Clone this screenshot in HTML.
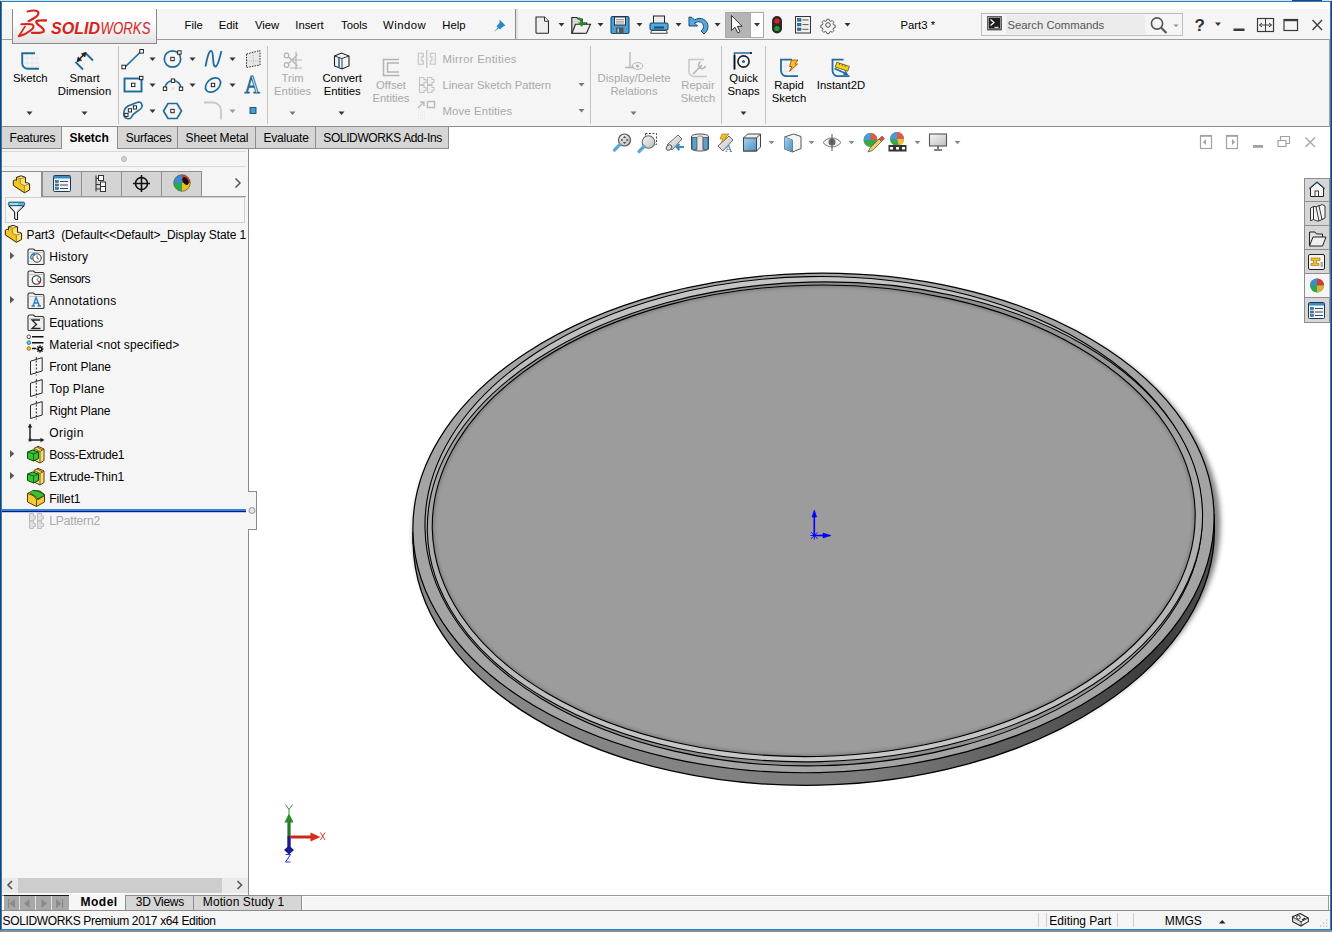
<!DOCTYPE html>
<html><head><meta charset="utf-8">
<style>
*{margin:0;padding:0;box-sizing:border-box}
html,body{width:1332px;height:932px;overflow:hidden;background:#3c3c48;position:relative}
.a{position:absolute}
.t{position:absolute;font-family:"Liberation Sans",sans-serif;font-size:11.3px;line-height:12px;white-space:nowrap;color:#000}
.g{color:#a9a9a9}
.b{font-weight:bold}
svg{position:absolute;overflow:visible}
</style></head><body>
<!-- desktop edges -->
<div class="a" style="left:0;top:0;width:1332px;height:1px;background:#e6dcd2"></div>
<div class="a" style="left:0;top:930px;width:1332px;height:2px;background:#8c8c8c"></div>
<!-- window -->
<div class="a" id="win" style="left:1px;top:1px;width:1330px;height:929px;border:1px solid #1883d7;background:#fff"></div>
<!-- menubar -->
<div class="a" style="left:2px;top:9px;width:1328px;height:30px;background:#f5f5f5"></div>
<div class="a" style="left:2px;top:39px;width:1328px;height:1px;background:#9c9c9c"></div>
<!-- ribbon -->
<div class="a" style="left:2px;top:40px;width:1328px;height:86px;background:#f5f5f5"></div>
<div class="a" style="left:2px;top:126px;width:1328px;height:1px;background:#8e8e8e"></div>
<div class="a" style="left:1329px;top:39px;width:1px;height:88px;background:#a0a0a0"></div>
<!-- logo box -->
<div class="a" style="left:12px;top:9px;width:145px;height:35px;border:1px solid #8a8a8a;border-top:none;background:linear-gradient(to bottom,#ffffff 0%,#fdfdfd 40%,#e2e2e2 100%)"></div>

<!-- graphics area -->
<div class="a" style="left:249px;top:127px;width:1081px;height:768px;background:#fff"></div>

<!-- tab strip -->


<!-- command manager tabs -->
<div class="a" style="left:2px;top:127px;width:447px;height:22px;background:#d6d6d6;border-right:1px solid #8e8e8e"></div>
<div class="a" style="left:61px;top:127px;width:1px;height:21px;background:#8e8e8e"></div>
<div class="a" style="left:62px;top:127px;width:55px;height:22px;background:#f5f5f5"></div>
<div class="a" style="left:117px;top:127px;width:1px;height:21px;background:#8e8e8e"></div>
<div class="a" style="left:177px;top:127px;width:1px;height:21px;background:#8e8e8e"></div>
<div class="a" style="left:255px;top:127px;width:1px;height:21px;background:#8e8e8e"></div>
<div class="a" style="left:315px;top:127px;width:1px;height:21px;background:#8e8e8e"></div>
<div class="a" style="left:2px;top:148px;width:60px;height:1px;background:#8e8e8e"></div>
<div class="a" style="left:117px;top:148px;width:332px;height:1px;background:#8e8e8e"></div>
<div class="t" style="left:9.5px;top:132px;font-size:12px;letter-spacing:-0.2px">Features</div>
<div class="t b" style="left:69.5px;top:132px;font-size:12px">Sketch</div>
<div class="t" style="left:125.7px;top:132px;font-size:12px;letter-spacing:-0.2px">Surfaces</div>
<div class="t" style="left:185.5px;top:132px;font-size:12px;letter-spacing:-0.1px">Sheet Metal</div>
<div class="t" style="left:263.5px;top:132px;font-size:12px;letter-spacing:-0.2px">Evaluate</div>
<div class="t" style="left:323.3px;top:132px;font-size:12px;letter-spacing:-0.38px">SOLIDWORKS Add-Ins</div>

<!-- 3D part -->
<svg style="left:0;top:0" width="1332" height="932">
<defs>
 <filter id="shb" x="-10%" y="-10%" width="120%" height="120%"><feGaussianBlur stdDeviation="2.6"/></filter>
 <filter id="aob" x="-5%" y="-5%" width="110%" height="110%"><feGaussianBlur stdDeviation="1.6"/></filter>
 <clipPath id="clipD"><ellipse cx="813.73" cy="520.84" rx="381.52" ry="235.68" transform="rotate(-1.278 813.73 520.84)"/></clipPath>
 <linearGradient id="gF" x1="0" y1="0" x2="0" y2="1"><stop offset="0" stop-color="#c6c6c6"/><stop offset="1" stop-color="#8c8c8c"/></linearGradient>
 <linearGradient id="gE2" x1="0" y1="0" x2="0" y2="1"><stop offset="0" stop-color="#8e8e8e"/><stop offset="1" stop-color="#c8c8c8"/></linearGradient>
 <linearGradient id="gSide" x1="0" y1="0" x2="1" y2="0"><stop offset="0" stop-color="#888888"/><stop offset="0.3" stop-color="#848484"/><stop offset="0.55" stop-color="#7c7c7c"/><stop offset="0.78" stop-color="#5a5a5a"/><stop offset="0.92" stop-color="#3c3c3c"/><stop offset="1" stop-color="#505050"/></linearGradient>
</defs>
<g>
 <ellipse cx="816.99" cy="529.28" rx="403.66" ry="251.49" transform="rotate(-1.268 816.99 529.28)" fill="#303030" opacity="0.6" filter="url(#shb)"/>
 <g transform="rotate(-1.268 813.49 522.98)">
  <ellipse cx="813.49" cy="535.58" rx="400.66" ry="249.69" fill="url(#gSide)" stroke="#000" stroke-width="1.3"/>
  <rect x="412.83" y="522.98" width="801.32" height="12.6" fill="url(#gSide)"/>
  <path d="M412.83 522.98 v12.6 M1214.15 522.98 v12.6" stroke="#000" stroke-width="1.3"/>
  <ellipse cx="813.49" cy="522.98" rx="400.66" ry="249.69" fill="#a4a4a4" stroke="#000" stroke-width="1.2"/>
 </g>
 <ellipse cx="813.62" cy="521.2" rx="388.69" ry="244.66" transform="rotate(-1.002 813.62 521.2)" fill="url(#gF)" stroke="#000" stroke-width="1.1"/>
 <ellipse cx="814.94" cy="521.88" rx="387.71" ry="239.82" transform="rotate(-1.498 814.94 521.88)" fill="url(#gE2)" stroke="#000" stroke-width="1.1"/>
 <ellipse cx="813.73" cy="520.84" rx="381.52" ry="235.68" transform="rotate(-1.278 813.73 520.84)" fill="#9c9c9c"/>
 <g clip-path="url(#clipD)"><ellipse cx="813.73" cy="520.84" rx="381.52" ry="235.68" transform="rotate(-1.278 813.73 520.84)" fill="none" stroke="#5c5c5c" stroke-width="4" opacity="0.45" filter="url(#aob)"/></g>
 <ellipse cx="813.73" cy="520.84" rx="381.52" ry="235.68" transform="rotate(-1.278 813.73 520.84)" fill="none" stroke="#000" stroke-width="1.1"/>
</g>
<!-- origin -->
<g fill="#0000ff" stroke="#0000ff">
 <path d="M814.3 535.5 V516" stroke-width="1.6"/>
 <path d="M814.3 510 l2.3 7 h-4.6 z" stroke-width="0.6"/>
 <path d="M814.3 535.5 H823" stroke-width="1.6"/>
 <path d="M831 535.5 l-8 -2.4 v4.8 z" stroke-width="0.6"/>
 <path d="M811 532.2 l6.6 6.6 M811 538.8 l6.6 -6.6 M810.5 535.5 h7.6 M814.3 531.5 v8" stroke-width="0.9"/>
</g>
<!-- triad -->
<g>
 <path d="M289 836 V822" stroke="#1e7a1e" stroke-width="3.2"/>
 <path d="M289 813.5 l4.6 9 h-9.2 z" fill="#2a8a2a"/>
 <path d="M285.5 804.5 l3.5 5 l3.5-5 M289 809.5 v5" fill="none" stroke="#1e8a1e" stroke-width="0.9"/>
 <path d="M289 836 V848" stroke="#1a1a90" stroke-width="3.4"/>
 <path d="M289 845.5 l5 4.5 l-5 4.5 l-5-4.5 z" fill="#1a1a90"/>
 <path d="M285.5 854.5 h5 l-5 7.5 h5" fill="none" stroke="#1a1af0" stroke-width="0.9"/>
 <path d="M290.5 837 H311" stroke="#c82a1a" stroke-width="3"/>
 <path d="M320.5 837 l-10-4.6 v9.2 z" fill="#d82a1a"/>
 <path d="M320.5 832.5 l4.5 7.5 M325 832.5 l-4.5 7.5" stroke="#e02020" stroke-width="0.9"/>
</g>
</svg>

<!-- feature manager panel -->
<div class="a" style="left:2px;top:149px;width:246px;height:746px;background:#f5f5f5"></div>
<div class="a" style="left:248px;top:149px;width:1px;height:342px;background:#8c8c8c"></div>
<div class="a" style="left:2px;top:151px;width:244px;height:1px;background:#d8d8d8"></div>
<div class="a" style="left:120.5px;top:155.5px;width:6px;height:6px;border-radius:3px;background:#d0d0d0;border:1px solid #b8b8b8"></div>
<div class="a" style="left:2px;top:166px;width:244px;height:1px;background:#d8d8d8"></div>
<!-- FM icon tabs -->
<div class="a" style="left:42px;top:171px;width:160px;height:26px;background:#d4d4d4;border:1px solid #8e8e8e;border-bottom:none"></div>
<div class="a" style="left:2px;top:171px;width:40px;height:1px;background:#8e8e8e"></div>
<div class="a" style="left:41px;top:171px;width:1px;height:26px;background:#8e8e8e"></div>
<div class="a" style="left:81px;top:171px;width:1px;height:26px;background:#8e8e8e"></div>
<div class="a" style="left:121px;top:171px;width:1px;height:26px;background:#8e8e8e"></div>
<div class="a" style="left:161px;top:171px;width:1px;height:26px;background:#8e8e8e"></div>
<div class="a" style="left:42px;top:196px;width:204px;height:1px;background:#9a9a9a"></div>
<!-- filter box -->
<div class="a" style="left:5px;top:197px;width:240px;height:26px;border:1px solid #cfcfcf;background:#f7f7f7"></div>


<!-- bottom tabs -->
<div class="a" style="left:2px;top:895px;width:1328px;height:1px;background:#8c8c8c"></div>
<div class="a" style="left:2px;top:896px;width:1328px;height:14px;background:#fff"></div>
<!-- status bar -->
<div class="a" style="left:2px;top:910px;width:1328px;height:1px;background:#8c8c8c"></div>
<div class="a" style="left:2px;top:911px;width:1328px;height:18px;background:#f5f5f5"></div>


<!-- logo -->
<svg style="left:0;top:0" width="170" height="48">
 <g fill="none" stroke="#d8231b" stroke-linecap="round">
  <path d="M27.6 11.4 C31 10.6 35 10.2 37.2 11.2 C39.6 12.6 38.2 15.2 36 16.9 C33.8 18.6 31 20 28.6 21.2" stroke-width="2.1"/>
  <path d="M21.4 24.3 C25 24 30 23.8 32.4 24.6 C34.4 25.5 33.6 28 31.2 30 C28.4 32.4 23.6 35 18.8 36.3" stroke-width="2.1"/>
  <path d="M25 26.4 L19 36" stroke-width="1.7"/>
  <path d="M46 20.5 C42.5 20.3 38.8 20.2 37 20.9 C35.4 21.6 36.6 23.8 39.4 25.6 C42.6 27.8 44.6 29.6 43.6 31.6 C42.6 33.2 37 33 32 32.8" stroke-width="2.3"/>
 </g>
 <text x="51" y="33.7" font-family="Liberation Sans" font-size="16.2" font-weight="bold" font-style="italic" fill="#d8231b" textLength="49" lengthAdjust="spacingAndGlyphs">SOLID</text>
 <text x="100.5" y="33.7" font-family="Liberation Sans" font-size="16.2" font-style="italic" fill="#d8231b" textLength="50" lengthAdjust="spacingAndGlyphs">WORKS</text>
</svg>
<!-- menu -->
<div class="t" style="left:184.5px;top:19px">File</div>
<div class="t" style="left:218.7px;top:19px">Edit</div>
<div class="t" style="left:255px;top:19px">View</div>
<div class="t" style="left:295.3px;top:19px">Insert</div>
<div class="t" style="left:341px;top:19px">Tools</div>
<div class="t" style="left:383px;top:19px;letter-spacing:0.5px">Window</div>
<div class="t" style="left:442.3px;top:19px">Help</div>
<div class="t" style="left:900.5px;top:19px">Part3 *</div>


<!-- quick access separator -->
<div class="a" style="left:515px;top:9px;width:1px;height:30px;background:#8c8c8c"></div>
<div class="a" style="left:516px;top:9px;width:3px;height:30px;background:linear-gradient(to right,#d8d8d8,#f5f5f5)"></div>
<svg style="left:0;top:0" width="1332" height="40">
 <!-- pin -->
 <path d="M499.5 19.5 l6 6 l-2.2 1 l-3.5 3 l-1.2-1.2 l-4.8 4 l4-4.8 l-1.2-1.2 l3-3.5 z" fill="#2b86c2"/>
 <!-- new doc -->
 <path d="M536 17 h8.5 l4 4.2 v11.3 a0.8 0.8 0 0 1 -0.8 0.8 h-10.9 a0.8 0.8 0 0 1 -0.8 -0.8 z" fill="#eeeeee" stroke="#2a2a2a" stroke-width="1.1"/>
 <path d="M544.5 17 v4.2 h4" fill="#fff" stroke="#2a2a2a" stroke-width="1"/>
 <path d="M558.5 23 h6 l-3 3.5 z" fill="#333"/>
 <!-- open -->
 <path d="M571.8 17.5 h5 l1.5 1.5 h4 v4 h4.5 l-4 10.2 h-11 z" fill="#d8d8d8" stroke="#222" stroke-width="1.1"/>
 <path d="M572 33.2 l3.5-9 h15 l-4 9 z" fill="#efefef" stroke="#222" stroke-width="1.1"/>
 <path d="M579 17 l4 4 v1.5 h2.5 l-3.8 4.3 l-3.8-4.3 h2.5 v-1 l-2.5-3 z" fill="#1f8a1f"/>
 <path d="M597.5 23 h6 l-3 3.5 z" fill="#333"/>
 <!-- save -->
 <rect x="611" y="16.5" width="18" height="17" rx="1.5" fill="#4a9ed4" stroke="#0d4f7a" stroke-width="1.1"/>
 <rect x="614.5" y="17" width="11" height="8" fill="#f4f4f4" stroke="#222" stroke-width="0.9"/>
 <path d="M616 19.5 h8 M616 21.3 h8 M616 23 h8" stroke="#666" stroke-width="0.6"/>
 <rect x="616" y="27.5" width="7.5" height="6" fill="#555"/>
 <rect x="617.5" y="28.5" width="1.5" height="4" fill="#9cd"/>
 <path d="M636.5 23 h6 l-3 3.5 z" fill="#333"/>
 <!-- print -->
 <rect x="653.5" y="16" width="11" height="8.5" fill="#ececec" stroke="#222" stroke-width="1"/>
 <rect x="650" y="23" width="18" height="7" rx="1.5" fill="#56a7d8" stroke="#0d4f7a" stroke-width="1.1"/>
 <rect x="654" y="26.5" width="10" height="2" fill="#0d4f7a"/>
 <path d="M651.5 30.5 h15 l0.8 2.8 h-16.6 z" fill="#fafafa" stroke="#333" stroke-width="0.9"/>
 <path d="M675.5 23 h6 l-3 3.5 z" fill="#333"/>
 <!-- undo -->
 <path d="M689 17 v9 h8.5 l-3 -3 c4-2.5 9-1 9 3.5 c0 2-1 3.5-2.5 4.5 l3 3 c2.5-2 4-4.5 4-7.5 c0-6.5-7.5-10.5-13.5-6.5 l-2.5-2.5 z" fill="#5aa6d6" stroke="#0d4f7a" stroke-width="1"/>
 <path d="M714.5 23 h6 l-3 3.5 z" fill="#333"/>
 <!-- select button -->
 <rect x="725.5" y="12.5" width="38" height="25" fill="#fff" stroke="#a8a8a8" stroke-width="1"/>
 <rect x="726" y="13" width="24.5" height="24" fill="#b4b4b4"/>
 <line x1="750.5" y1="12.5" x2="750.5" y2="37.5" stroke="#a8a8a8" stroke-width="1"/>
 <path d="M731.5 15.5 v15 l3.5-3.2 l2.8 5.5 l2.2-1.1 l-2.7-5.4 h4.8 z" fill="#fff" stroke="#222" stroke-width="0.9"/>
 <path d="M754 23 h6 l-3 3.5 z" fill="#333"/>
 <!-- traffic light -->
 <rect x="772" y="16" width="10" height="17.5" rx="5" fill="#2a2a2a"/>
 <circle cx="777" cy="21" r="2.6" fill="#e02020"/>
 <circle cx="777" cy="28.5" r="2.6" fill="#20a030"/>
 <!-- options -->
 <rect x="795.5" y="16.5" width="15" height="16.5" fill="#f0f0f0" stroke="#333" stroke-width="1"/>
 <rect x="797.5" y="18.6" width="3.5" height="2.6" fill="#2d78b4" stroke="#0d3f6a" stroke-width="0.5"/>
 <rect x="797.5" y="23.3" width="3.5" height="2.6" fill="#2d78b4" stroke="#0d3f6a" stroke-width="0.5"/>
 <rect x="797.5" y="28" width="3.5" height="2.6" fill="#2d78b4" stroke="#0d3f6a" stroke-width="0.5"/>
 <path d="M802.5 19.9 h6 M802.5 24.6 h6 M802.5 29.3 h6" stroke="#333" stroke-width="0.8"/>
 <!-- gear -->
 <g transform="translate(828 25) scale(0.72)">
  <path d="M-1.6 -8 h3.2 l0.5 2.2 l1.9 0.8 l1.9-1.2 l2.3 2.3 l-1.2 1.9 l0.8 1.9 l2.2 0.5 v3.2 l-2.2 0.5 l-0.8 1.9 l1.2 1.9 l-2.3 2.3 l-1.9-1.2 l-1.9 0.8 l-0.5 2.2 h-3.2 l-0.5-2.2 l-1.9-0.8 l-1.9 1.2 l-2.3-2.3 l1.2-1.9 l-0.8-1.9 l-2.2-0.5 v-3.2 l2.2-0.5 l0.8-1.9 l-1.2-1.9 l2.3-2.3 l1.9 1.2 l1.9-0.8 z" fill="#f4f4f4" stroke="#444" stroke-width="1.2"/>
  <circle r="3.2" fill="none" stroke="#444" stroke-width="1.3"/>
 </g>
 <path d="M844.5 23 h6 l-3 3.5 z" fill="#333"/>
</svg>


<!-- search box -->
<div class="a" style="left:981px;top:13px;width:202px;height:23px;border:1px solid #bcbcbc;background:#f5f5f5"></div>
<div class="a" style="left:1006px;top:15px;width:139px;height:19px;background:#ebebeb"></div>
<div class="t" style="left:1007.5px;top:19px;color:#555">Search Commands</div>
<svg style="left:0;top:0" width="1332" height="40">
 <rect x="987.5" y="16.5" width="14" height="13.5" fill="#1e1e1e" stroke="#555" stroke-width="0.8"/>
 <rect x="988.6" y="17.6" width="11.8" height="11.3" fill="none" stroke="#ddd" stroke-width="0.6"/>
 <path d="M990.5 19.5 l3.5 3 l-3.5 3" fill="none" stroke="#fff" stroke-width="1.2"/>
 <path d="M994.5 27.3 h4" stroke="#fff" stroke-width="1"/>
 <circle cx="1157" cy="23.5" r="5.6" fill="none" stroke="#555" stroke-width="1.6"/>
 <path d="M1161 27.5 l5.5 5.5" stroke="#555" stroke-width="2.2"/>
 <path d="M1173.5 24.5 h5 l-2.5 2.5 z" fill="#888"/>
 <text x="1194.5" y="30.5" font-family="Liberation Sans" font-size="17" font-weight="bold" fill="#333">?</text>
 <path d="M1215 22.5 h6 l-3 3.5 z" fill="#333"/>
 <rect x="1233.5" y="28.5" width="11" height="2.5" fill="#3a3a3a"/>
 <rect x="1257.5" y="18.5" width="16" height="13" fill="none" stroke="#3a3a3a" stroke-width="1.2"/>
 <path d="M1265.5 19 v12" stroke="#3a3a3a" stroke-width="1"/>
 <path d="M1259.5 25 h12 M1262 23 l-2.5 2 l2.5 2 M1269 23 l2.5 2 l-2.5 2" fill="none" stroke="#3a3a3a" stroke-width="1"/>
 <rect x="1284" y="19.5" width="13.5" height="11" fill="none" stroke="#3a3a3a" stroke-width="1.2"/>
 <rect x="1284" y="19.2" width="13.5" height="2" fill="#3a3a3a"/>
 <path d="M1312.5 20 l9.5 10 M1322 20 l-9.5 10" stroke="#3a3a3a" stroke-width="1.3"/>
</svg>
<!-- desktop sliver at top right -->
<div class="a" style="left:1292px;top:0;width:30px;height:1px;background:#3c3c60"></div>

<!-- ribbon -->
<div class="a" style="left:118px;top:46px;width:1px;height:78px;background:#c4c4c4"></div>
<div class="a" style="left:267px;top:46px;width:1px;height:78px;background:#c4c4c4"></div>
<div class="a" style="left:590px;top:46px;width:1px;height:78px;background:#c4c4c4"></div>
<div class="a" style="left:721px;top:46px;width:1px;height:78px;background:#c4c4c4"></div>
<div class="a" style="left:765px;top:46px;width:1px;height:78px;background:#c4c4c4"></div>
<div class="t " style="left:-29.7px;width:120px;text-align:center;top:72px">Sketch</div>
<div class="t " style="left:24.5px;width:120px;text-align:center;top:72px">Smart</div>
<div class="t " style="left:24.5px;width:120px;text-align:center;top:85px">Dimension</div>
<div class="t g" style="left:232.60000000000002px;width:120px;text-align:center;top:72px">Trim</div>
<div class="t g" style="left:232.60000000000002px;width:120px;text-align:center;top:85px">Entities</div>
<div class="t " style="left:282.2px;width:120px;text-align:center;top:72px">Convert</div>
<div class="t " style="left:282.2px;width:120px;text-align:center;top:85px">Entities</div>
<div class="t g" style="left:331px;width:120px;text-align:center;top:79px">Offset</div>
<div class="t g" style="left:331px;width:120px;text-align:center;top:92px">Entities</div>
<div class="t g" style="left:442.5px;top:53px;letter-spacing:0.3px">Mirror Entities</div>
<div class="t g" style="left:442.5px;top:79px">Linear Sketch Pattern</div>
<div class="t g" style="left:442.5px;top:105px;letter-spacing:0.15px">Move Entities</div>
<div class="t g" style="left:574px;width:120px;text-align:center;top:72px">Display/Delete</div>
<div class="t g" style="left:574px;width:120px;text-align:center;top:85px">Relations</div>
<div class="t g" style="left:638px;width:120px;text-align:center;top:79px">Repair</div>
<div class="t g" style="left:638px;width:120px;text-align:center;top:91.5px">Sketch</div>
<div class="t " style="left:683.6px;width:120px;text-align:center;top:72px">Quick</div>
<div class="t " style="left:683.6px;width:120px;text-align:center;top:85px">Snaps</div>
<div class="t " style="left:729px;width:120px;text-align:center;top:79px">Rapid</div>
<div class="t " style="left:729px;width:120px;text-align:center;top:91.5px">Sketch</div>
<div class="t " style="left:781px;width:120px;text-align:center;top:79px">Instant2D</div>
<svg style="left:0;top:0" width="1332" height="127">
 <path d="M26.5 111.5 h6 l-3 3.5 z" fill="#333"/> <path d="M81.5 111.5 h6 l-3 3.5 z" fill="#333"/> <path d="M289.5 111.5 h6 l-3 3.5 z" fill="#777"/> <path d="M338.5 111.5 h6 l-3 3.5 z" fill="#333"/> <path d="M630.5 111.5 h6 l-3 3.5 z" fill="#777"/> <path d="M740.5 111.5 h6 l-3 3.5 z" fill="#333"/>
 <path d="M578.5 83 h6 l-3 3.5 z" fill="#777"/> <path d="M578.5 109 h6 l-3 3.5 z" fill="#777"/>
 <path d="M149.5 57.5 h6 l-3 3.5 z" fill="#333"/> <path d="M189.5 57.5 h6 l-3 3.5 z" fill="#333"/> <path d="M229.5 57.5 h6 l-3 3.5 z" fill="#333"/>
 <path d="M149.5 83.5 h6 l-3 3.5 z" fill="#333"/> <path d="M189.5 83.5 h6 l-3 3.5 z" fill="#333"/> <path d="M229.5 83.5 h6 l-3 3.5 z" fill="#333"/>
 <path d="M149.5 109.5 h6 l-3 3.5 z" fill="#333"/> <path d="M229.5 109.5 h6 l-3 3.5 z" fill="#999"/>
 <!-- sketch icon -->
 <g stroke="#e2e2e2" stroke-width="0.8"><path d="M27 54 v15 M32 54 v15 M37 54 v15 M23 58 h16 M23 63 h16 M23 67 h16"/></g>
 <path d="M35 53.2 h-12.8 v10 a5.5 5.5 0 0 0 5.5 5.5 h11.3" fill="none" stroke="#1f6c9c" stroke-width="1.9"/>
 <!-- smart dimension -->
 <path d="M75.5 62 l7.5 7.5 M85 52.5 l8 8" stroke="#1f6c9c" stroke-width="1.8"/>
 <path d="M77.5 61 l8-8" stroke="#222" stroke-width="1.6"/>
 <path d="M77 61.5 l1.2-4.5 l3.3 3.3 z M86 52.5 l-4.5 1.2 l3.3 3.3 z" fill="#222" stroke="#222" stroke-width="0.8"/>
 <!-- line -->
 <path d="M124.5 67.5 L141 51.5" stroke="#1f6c9c" stroke-width="1.7"/>
 <rect x="121.9" y="65.2" width="3.6" height="3.6" fill="#fff" stroke="#111" stroke-width="0.9"/>
 <rect x="139.8" y="49.5" width="3.6" height="3.6" fill="#fff" stroke="#111" stroke-width="0.9"/>
 <!-- circle -->
 <circle cx="172.5" cy="59" r="8.2" fill="none" stroke="#1f6c9c" stroke-width="1.7"/>
 <rect x="170.8" y="57.3" width="3.4" height="3.4" fill="#fff" stroke="#111" stroke-width="0.9"/>
 <rect x="177.7" y="50.8" width="3.4" height="3.4" fill="#fff" stroke="#111" stroke-width="0.9"/>
 <!-- spline -->
 <path d="M205.5 66.5 C207 58 209 50 211.5 51 C214 52 212 67 215.5 66.5 C218.5 66 220 55 221.5 51" fill="none" stroke="#1f6c9c" stroke-width="1.8"/>
 <!-- plane -->
 <path d="M246.5 54 L260 50.5 V65 L246.5 67.5 Z" fill="#e8e8e8" stroke="#222" stroke-width="0.9" stroke-dasharray="1.6 1.1"/>
 <path d="M253.2 51 v16 M247 61 h13" stroke="#aaa" stroke-width="0.7" stroke-dasharray="1 1"/>
 <!-- rectangle -->
 <rect x="124.5" y="78.5" width="17" height="13" fill="none" stroke="#1f6c9c" stroke-width="1.9"/>
 <rect x="131.5" y="83.2" width="3.4" height="3.4" fill="#fff" stroke="#111" stroke-width="0.9"/>
 <rect x="139.5" y="76.3" width="3.4" height="3.4" fill="#fff" stroke="#111" stroke-width="0.9"/>
 <!-- arc -->
 <path d="M165 88.5 A8 8 0 0 1 181 88.5" fill="none" stroke="#1f6c9c" stroke-width="1.6"/>
 <rect x="163.3" y="87" width="3.4" height="3.4" fill="#fff" stroke="#111" stroke-width="0.9"/>
 <rect x="179.3" y="87" width="3.4" height="3.4" fill="#fff" stroke="#111" stroke-width="0.9"/>
 <rect x="171.3" y="79" width="3.4" height="3.4" fill="#fff" stroke="#111" stroke-width="0.9"/>
 <path d="M171.8 87.2 l2.6 2.6 M174.4 87.2 l-2.6 2.6" stroke="#ccc" stroke-width="0.7"/>
 <!-- ellipse -->
 <ellipse cx="213" cy="85" rx="8.5" ry="6" transform="rotate(-40 213 85)" fill="none" stroke="#1f6c9c" stroke-width="1.7"/>
 <rect x="211.3" y="83.3" width="3.4" height="3.4" fill="#fff" stroke="#111" stroke-width="0.9"/>
 <!-- text A -->
 <text x="0" y="0" transform="translate(244.6 93) scale(0.86 1)" font-family="Liberation Serif" font-size="24.5" fill="#f7f7f7" stroke="#1f6c9c" stroke-width="1.1">A</text>
 <!-- slot -->
 <path d="M127 118.5 C122 117 123 109 128 106 L137 102.5 C142 101 143.5 106 140.5 109 C137 112 133 113 131.5 117 C130.5 119.5 129 119 127 118.5 Z" fill="none" stroke="#1f6c9c" stroke-width="1.6"/>
 <rect x="128.3" y="108.8" width="3.2" height="3.2" fill="#fff" stroke="#111" stroke-width="0.9"/>
 <rect x="133.3" y="105.8" width="3.2" height="3.2" fill="#fff" stroke="#111" stroke-width="0.9"/>
 <rect x="124.8" y="113.3" width="3.2" height="3.2" fill="#fff" stroke="#111" stroke-width="0.9"/>
 <!-- polygon -->
 <path d="M168 103.5 h9 l4.5 7.5 l-4.5 7.5 h-9 l-4.5-7.5 z" fill="none" stroke="#1f6c9c" stroke-width="1.7"/>
 <rect x="170.8" y="109.3" width="3.4" height="3.4" fill="#fff" stroke="#111" stroke-width="0.9"/>
 <!-- fillet disabled -->
 <path d="M204 102.5 h9 a8 8 0 0 1 8 8 v9" fill="none" stroke="#c8c8c8" stroke-width="1.8"/>
 <!-- point -->
 <rect x="250" y="107.5" width="6" height="6" fill="#4a9ad0" stroke="#0d4f7a" stroke-width="0.9"/>
 <!-- trim disabled -->
 <g fill="none" stroke="#b4b4b4" stroke-width="1.2">
  <circle cx="286.5" cy="55.5" r="2.3"/><circle cx="286.5" cy="65" r="2.3"/>
  <path d="M288.5 57 l9 9 M288.5 63.5 l9-9 M296 51.5 v18 M290 68 h12 M293 60 h9"/>
 </g>
 <!-- convert cube -->
 <path d="M334.5 56 l7-3 l7.5 3 v10 l-7 3 l-7.5-3 z" fill="#f4f4f4" stroke="#222" stroke-width="1.1"/>
 <path d="M334.5 56 l7.5 2.5 l7-2.5 M342 58.5 v10.5" fill="none" stroke="#222" stroke-width="0.9"/>
 <path d="M339 58 v10" stroke="#1f6c9c" stroke-width="1.6"/>
 <!-- offset disabled -->
 <path d="M399 59.5 h-15.5 v16 h16 M399 63 h-11.5 v9 h11.5" fill="none" stroke="#b4b4b4" stroke-width="1.5"/>
 <!-- mirror disabled -->
 <g fill="#f2f2f2" stroke="#c4c4c4" stroke-width="1.1">
  <path d="M418.3 53.3 h5 v3.5 h-1.6 v4 h1.6 v3.5 h-5 z M435.3 53.3 h-5 v3.5 h1.6 v4 h-1.6 v3.5 h5 z"/>
  <path d="M419.5 77.5 h4.5 v2 h2 v3 h-2 v2 h-4.5 z M427.5 77.5 h4.5 v2 h2 v3 h-2 v2 h-4.5 z M419.5 85.5 h4.5 v2 h2 v3 h-2 v2 h-4.5 z M427.5 85.5 h4.5 v2 h2 v3 h-2 v2 h-4.5 z "/>
 </g>
 <path d="M426.8 50 v18" stroke="#b8b8b8" stroke-width="1.1"/>
 <path d="M418 108 l6-6 M420 102 h4 v4" fill="none" stroke="#bbb" stroke-width="1.4"/>
 <rect x="427.5" y="101.5" width="7" height="6" fill="none" stroke="#bbb" stroke-width="1.5"/>
 <path d="M418 112 h7 M418 115 h7 M418 118 h7" stroke="#ddd" stroke-width="0.8" stroke-dasharray="1 1"/>
 <!-- display/delete relations disabled -->
 <path d="M630 52 v15.5 M625 67.5 h9" stroke="#b4b4b4" stroke-width="1.3"/>
 <ellipse cx="637.5" cy="66" rx="5.3" ry="3.4" fill="none" stroke="#b4b4b4" stroke-width="1"/>
 <circle cx="637.5" cy="66" r="1.6" fill="#b4b4b4"/>
 <!-- repair disabled -->
 <path d="M704 59.5 h-15 v12 a5 5 0 0 0 5 5 h13" fill="none" stroke="#c8c8c8" stroke-width="1.5"/>
 <path d="M693 74 l9-9 M700.5 62 a3.5 3.5 0 1 0 5 4" fill="none" stroke="#b4b4b4" stroke-width="1.6"/>
 <!-- quick snaps -->
 <path d="M734.5 70 v-17 h17" fill="none" stroke="#1f6c9c" stroke-width="1.6"/>
 <path d="M734.5 55 v14 M750 53 h2" stroke="#111" stroke-width="1.6"/>
 <circle cx="743.5" cy="61.5" r="5.6" fill="none" stroke="#222" stroke-width="1.6"/>
 <circle cx="743.5" cy="61.5" r="1.5" fill="#1f6c9c"/>
 <!-- rapid sketch -->
 <g stroke="#e0e0e0" stroke-width="0.7"><path d="M786 61 v15 M792 61 v15 M781 66 h17 M781 71 h17"/></g>
 <path d="M792 59.7 h-11 v11 a5.5 5.5 0 0 0 5.5 5.5 h11.5" fill="none" stroke="#1f6c9c" stroke-width="1.8"/>
 <path d="M791.5 60 h6.5 l-3 4 h2.5 l-8 7.5 l2.5-5 h-2.5 z" fill="#f2c418" stroke="#b03a10" stroke-width="0.8"/>
 <!-- instant2d -->
 <path d="M843.5 59.7 h-11 v11 a5.5 5.5 0 0 0 5.5 5.5 h11.5" fill="none" stroke="#1f6c9c" stroke-width="1.8"/>
 <path d="M836.8 62.2 l12.5 4.2 l-1.6 4.8 l-12.5-4.2 z" fill="#f3d020" stroke="#4a3a10" stroke-width="0.7"/>
 <path d="M839.5 63.2 v1.8 M842.3 64.1 v1.8 M845.1 65.1 v1.8" stroke="#4a3a10" stroke-width="0.7"/>
 <path d="M834.5 68.5 l10 4.5" stroke="#1f6c9c" stroke-width="1.8"/>
 <path d="M848.5 75 l-5.5 0.2 l2.3-4.6 z" fill="#1f6c9c"/>
</svg>

<!-- tree -->
<div class="a" style="left:248px;top:491px;width:9px;height:39px;background:#f5f5f5;border:1px solid #8c8c8c;border-left:none"></div>
<div class="a" style="left:248px;top:529px;width:1px;height:366px;background:#8c8c8c"></div>
<svg style="left:0;top:0" width="260" height="540">
<g transform="translate(5 225)">
 <path d="M0.3 9.9 L0.3 5.2 L1.6 5.8 L3.4 5.0 L3.4 1.9 L7.3 3.2 L7.3 8.1 L11.4 10.1 L11.4 17.3 Z" fill="#f2c81c"/>
 <path d="M7.3 3.2 L12.5 1.9 L12.5 7.3 L7.3 8.1 Z M11.4 10.1 L16.6 8.3 L16.6 14.5 L11.4 17.3 Z" fill="#f8e45a"/>
 <path d="M3.4 1.9 L8.1 0.3 L12.5 1.9 L7.3 3.2 Z M7.3 8.1 L12.5 7.3 L16.6 8.3 L11.4 10.1 Z M0.3 5.2 L2.2 4.4 L3.4 5.0 L1.6 5.8 Z" fill="#f8e8a8"/>
 <path d="M7.3 3.2 V8.1 M11.4 10.1 V17.3 M3.4 1.9 L7.3 3.2 L12.5 1.9 M7.3 8.1 L11.4 10.1 L16.6 8.3" fill="none" stroke="#8a5a10" stroke-width="0.7"/>
 <path d="M0.3 9.9 L0.3 5.2 L2.2 4.4 L3.4 5.0 L3.4 1.9 L8.1 0.3 L12.5 1.9 L12.5 7.3 L14.5 7.3 L16.6 8.3 L16.6 14.5 L11.4 17.3 Z" fill="none" stroke="#3a2000" stroke-width="1" stroke-linejoin="round"/>
</g><path d="M10 252 v7.5 l4.3-3.75 z" fill="#5a5a5a"/>
<path d="M10 296 v7.5 l4.3-3.75 z" fill="#5a5a5a"/>
<path d="M10 450 v7.5 l4.3-3.75 z" fill="#5a5a5a"/>
<path d="M10 472 v7.5 l4.3-3.75 z" fill="#5a5a5a"/>
<g transform="translate(27 248)">
 <path d="M1 15.5 V2.5 a1.5 1.5 0 0 1 1.5-1.5 h4 l1.5 1.5 h7.5 a1.5 1.5 0 0 1 1.5 1.5 v11.5 a1 1 0 0 1 -1 1 h-14 a1 1 0 0 1 -1-1 z" fill="#f0f0f0" stroke="#333" stroke-width="1.1"/>
 <path d="M1.5 4.5 h15" stroke="#bbb" stroke-width="0.8"/>
 <circle cx="10" cy="10" r="4.2" fill="#fff" stroke="#333" stroke-width="1"/><path d="M10 7.5 v2.5 l2 1.2" fill="none" stroke="#333" stroke-width="0.8"/><path d="M3.5 10 a5 5 0 0 1 4-4.5 l-0.5 2 M3.5 10 l2 1.5" fill="none" stroke="#2b7fba" stroke-width="1.3"/>
</g><g transform="translate(27 270)">
 <path d="M1 15.5 V2.5 a1.5 1.5 0 0 1 1.5-1.5 h4 l1.5 1.5 h7.5 a1.5 1.5 0 0 1 1.5 1.5 v11.5 a1 1 0 0 1 -1 1 h-14 a1 1 0 0 1 -1-1 z" fill="#f0f0f0" stroke="#333" stroke-width="1.1"/>
 <path d="M1.5 4.5 h15" stroke="#bbb" stroke-width="0.8"/>
 <circle cx="9.5" cy="10" r="4.3" fill="#fff" stroke="#333" stroke-width="1.1"/><path d="M9.5 10 l3-3" stroke="#2b7fba" stroke-width="1"/><path d="M9.5 10 l3 3.5 a4.3 4.3 0 0 0 1.2-2 z" fill="#d02020"/>
</g><g transform="translate(27 292)">
 <path d="M1 15.5 V2.5 a1.5 1.5 0 0 1 1.5-1.5 h4 l1.5 1.5 h7.5 a1.5 1.5 0 0 1 1.5 1.5 v11.5 a1 1 0 0 1 -1 1 h-14 a1 1 0 0 1 -1-1 z" fill="#f0f0f0" stroke="#333" stroke-width="1.1"/>
 <path d="M1.5 4.5 h15" stroke="#bbb" stroke-width="0.8"/>
 <path d="M4.5 14 h3.5 M10.5 14 h3.5 M6 14 L9 5.5 L12.5 14 M7.3 11 h3.5" fill="none" stroke="#2b7fba" stroke-width="1.4"/>
</g><g transform="translate(27 314)">
 <path d="M1 15.5 V2.5 a1.5 1.5 0 0 1 1.5-1.5 h4 l1.5 1.5 h7.5 a1.5 1.5 0 0 1 1.5 1.5 v11.5 a1 1 0 0 1 -1 1 h-14 a1 1 0 0 1 -1-1 z" fill="#f0f0f0" stroke="#333" stroke-width="1.1"/>
 <path d="M1.5 4.5 h15" stroke="#bbb" stroke-width="0.8"/>
 <path d="M13 6 h-8 l4.5 4.5 l-4.5 4 h8.5" fill="none" stroke="#222" stroke-width="1.3"/>
</g><g transform="translate(26 334.5)">
 <circle cx="2.8" cy="2.3" r="1.8" fill="#fff" stroke="#444" stroke-width="0.9"/>
 <circle cx="2.8" cy="8.2" r="1.8" fill="#6cc4f0" stroke="#2a6a9a" stroke-width="0.9"/>
 <circle cx="2.8" cy="14" r="1.8" fill="#f2c020" stroke="#9a6a10" stroke-width="0.9"/>
 <path d="M6 2.3 h11.5 M6 8.2 h11.5 M6 14 h4" stroke="#111" stroke-width="1.5"/>
 <circle cx="14" cy="14.5" r="2.6" fill="#111"/>
 <path d="M14 10.8 v7.4 M10.3 14.5 h7.4 M11.4 11.9 l5.2 5.2 M16.6 11.9 l-5.2 5.2" stroke="#111" stroke-width="1.2"/>
 <circle cx="14" cy="14.5" r="1" fill="#fff"/>
</g><g transform="translate(30 357)">
 <path d="M0.5 4.2 L12.2 0.6 V14 L0.5 17.5 Z" fill="none" stroke="#2a2a2a" stroke-width="1"/>
 <path d="M6.3 0 V18.5" stroke="#2a2a2a" stroke-width="1" stroke-dasharray="2 1.5"/>
</g><g transform="translate(30 379)">
 <path d="M0.5 4.2 L12.2 0.6 V14 L0.5 17.5 Z" fill="none" stroke="#2a2a2a" stroke-width="1"/>
 <path d="M6.3 0 V18.5" stroke="#2a2a2a" stroke-width="1" stroke-dasharray="2 1.5"/>
</g><g transform="translate(30 401)">
 <path d="M0.5 4.2 L12.2 0.6 V14 L0.5 17.5 Z" fill="none" stroke="#2a2a2a" stroke-width="1"/>
 <path d="M6.3 0 V18.5" stroke="#2a2a2a" stroke-width="1" stroke-dasharray="2 1.5"/>
</g><path d="M30 424.5 v15.5 h13" fill="none" stroke="#222" stroke-width="1.5"/>
<path d="M27.7 427.5 l2.3-4 l2.3 4 z M40.5 437.7 l4 2.3 l-4 2.3 z" fill="#222"/>
<rect x="28.6" y="438.6" width="2.8" height="2.8" fill="#222"/><g transform="translate(27 445.5)">
 <path d="M7 3 L11 0.8 L17 3.5 V15 L13 17.5 L7 14.5 Z" fill="#f8e070" stroke="#5a3a08" stroke-width="1"/>
 <path d="M7 3 L13 6 V17.5 M13 6 L17 3.5 M10 1.5 L15.5 4.5" fill="none" stroke="#5a3a08" stroke-width="0.8"/>
 <path d="M0.5 6.5 L5.5 4.5 L11.5 6.5 V13 L6.5 15.5 L0.5 13 Z" fill="#35c435" stroke="#0a4a0a" stroke-width="1"/>
 <path d="M0.5 6.5 L6.5 8.5 L11.5 6.5 M6.5 8.5 V15.5" fill="none" stroke="#0a4a0a" stroke-width="0.8"/>
</g><g transform="translate(27 467.5)">
 <path d="M7 3 L11 0.8 L17 3.5 V15 L13 17.5 L7 14.5 Z" fill="#f8e070" stroke="#5a3a08" stroke-width="1"/>
 <path d="M7 3 L13 6 V17.5 M13 6 L17 3.5 M10 1.5 L15.5 4.5" fill="none" stroke="#5a3a08" stroke-width="0.8"/>
 <path d="M0.5 6.5 L5.5 4.5 L11.5 6.5 V13 L6.5 15.5 L0.5 13 Z" fill="#35c435" stroke="#0a4a0a" stroke-width="1"/>
 <path d="M0.5 6.5 L6.5 8.5 L11.5 6.5 M6.5 8.5 V15.5" fill="none" stroke="#0a4a0a" stroke-width="0.8"/>
</g><g transform="translate(27 489.5)">
 <path d="M0.5 4 L6 1 L13 1.5 L17.5 5 V12.5 L9.5 17 L0.5 12.5 Z" fill="#f2cc30" stroke="#5a3a08" stroke-width="1"/>
 <path d="M6 1 C11 1 15 3 17.5 6 L11 10 C9 7 6 5 3 4" fill="#33c433" stroke="#0a4a0a" stroke-width="0.9"/>
 <path d="M9.5 10 V17 M0.5 4 C5 5 8 7 9.5 10 L17.5 6" fill="none" stroke="#5a3a08" stroke-width="0.9"/>
</g><g transform="translate(29 513)" fill="#e0e0e0" stroke="#bdbdbd" stroke-width="1">
 <path d="M0.5 0.5 h4 v2.5 h2 v3 h-2 v2 h-4 z"/><path d="M8.5 0.5 h4 v2.5 h2 v3 h-2 v2 h-4 z"/>
 <path d="M0.5 8 h4 v2.5 h2 v3 h-2 v2 h-4 z"/><path d="M8.5 8 h4 v2.5 h2 v3 h-2 v2 h-4 z"/>
</g><rect x="2" y="509" width="244" height="2" fill="#2a8cc8"/><rect x="2" y="511" width="244" height="1.2" fill="#1a0ea0"/>
<circle cx="252" cy="510.5" r="3" fill="#e6e6e6" stroke="#888" stroke-width="0.9"/>
</svg>
<div class="t " style="left:26.5px;top:229px;font-size:12px;letter-spacing:-0.1px">Part3 &nbsp;(Default&lt;&lt;Default&gt;_Display State 1</div>
<div class="t " style="left:49.3px;top:251px;font-size:12px;letter-spacing:0.22px;">History</div>
<div class="t " style="left:49.3px;top:273px;font-size:12px;letter-spacing:-0.45px;">Sensors</div>
<div class="t " style="left:49.3px;top:295px;font-size:12px;letter-spacing:0.35px;">Annotations</div>
<div class="t " style="left:49.3px;top:317px;font-size:12px;letter-spacing:0.06px;">Equations</div>
<div class="t " style="left:49.3px;top:339px;font-size:12px;letter-spacing:0.11px;">Material &lt;not specified&gt;</div>
<div class="t " style="left:49.3px;top:361px;font-size:12px;letter-spacing:-0.03px;">Front Plane</div>
<div class="t " style="left:49.3px;top:383px;font-size:12px;letter-spacing:0.21px;">Top Plane</div>
<div class="t " style="left:49.3px;top:405px;font-size:12px;letter-spacing:-0.08px;">Right Plane</div>
<div class="t " style="left:49.3px;top:427px;font-size:12px;letter-spacing:0.4px;">Origin</div>
<div class="t " style="left:49.3px;top:449px;font-size:12px;letter-spacing:-0.29px;">Boss-Extrude1</div>
<div class="t " style="left:49.3px;top:471px;font-size:12px;letter-spacing:-0.04px;">Extrude-Thin1</div>
<div class="t " style="left:49.3px;top:493px;font-size:12px;letter-spacing:-0.13px;">Fillet1</div>
<div class="t g" style="left:49.3px;top:515px;font-size:12px;letter-spacing:-0.15px;">LPattern2</div>


<!-- FM tab icons -->
<svg style="left:0;top:0" width="260" height="230">
 <g transform="translate(13 175.5)">
 <path d="M0.3 9.9 L0.3 5.2 L1.6 5.8 L3.4 5.0 L3.4 1.9 L7.3 3.2 L7.3 8.1 L11.4 10.1 L11.4 17.3 Z" fill="#f2c81c"/>
 <path d="M7.3 3.2 L12.5 1.9 L12.5 7.3 L7.3 8.1 Z M11.4 10.1 L16.6 8.3 L16.6 14.5 L11.4 17.3 Z" fill="#f8e45a"/>
 <path d="M3.4 1.9 L8.1 0.3 L12.5 1.9 L7.3 3.2 Z M7.3 8.1 L12.5 7.3 L16.6 8.3 L11.4 10.1 Z M0.3 5.2 L2.2 4.4 L3.4 5.0 L1.6 5.8 Z" fill="#f8e8a8"/>
 <path d="M7.3 3.2 V8.1 M11.4 10.1 V17.3 M3.4 1.9 L7.3 3.2 L12.5 1.9 M7.3 8.1 L11.4 10.1 L16.6 8.3" fill="none" stroke="#8a5a10" stroke-width="0.7"/>
 <path d="M0.3 9.9 L0.3 5.2 L2.2 4.4 L3.4 5.0 L3.4 1.9 L8.1 0.3 L12.5 1.9 L12.5 7.3 L14.5 7.3 L16.6 8.3 L16.6 14.5 L11.4 17.3 Z" fill="none" stroke="#3a2000" stroke-width="1" stroke-linejoin="round"/>
</g>
 <rect x="53.5" y="175.5" width="17" height="16" rx="1" fill="#f4f4f4" stroke="#1a3a5a" stroke-width="1"/>
 <rect x="54" y="176" width="16" height="2.5" fill="#3a8ac8"/>
 <rect x="55.5" y="180.5" width="3" height="2" fill="#3a8ac8" stroke="#1a3a5a" stroke-width="0.5"/>
 <rect x="55.5" y="184" width="3" height="2" fill="#3a8ac8" stroke="#1a3a5a" stroke-width="0.5"/>
 <rect x="55.5" y="187.5" width="3" height="2" fill="#3a8ac8" stroke="#1a3a5a" stroke-width="0.5"/>
 <path d="M60 181.5 h8 M60 185 h8 M60 188.5 h8" stroke="#1a3a5a" stroke-width="0.9"/>
 <path d="M96 175.5 v16 M96 178.5 h4 M96 189 h4" fill="none" stroke="#333" stroke-width="1.1"/>
 <rect x="98.5" y="175.5" width="5" height="5" fill="#fff" stroke="#333" stroke-width="1"/>
 <rect x="100.5" y="182" width="5" height="5" fill="#fff" stroke="#333" stroke-width="1"/>
 <rect x="100.5" y="186.5" width="5" height="5" fill="#fff" stroke="#333" stroke-width="1"/>
 <path d="M96 184.5 h4.5" stroke="#333" stroke-width="1"/>
 <circle cx="141.5" cy="183.5" r="6" fill="none" stroke="#111" stroke-width="1.6"/>
 <path d="M141.5 175 v17 M133 183.5 h17" stroke="#111" stroke-width="1.6"/>
 <circle cx="182" cy="183" r="8.3" fill="#2aa84a"/>
 <path d="M182 183 L182 174.7 A8.3 8.3 0 0 1 190.2 183.5 Z" fill="#d83a2a"/>
 <path d="M182 183 L173.7 183 A8.3 8.3 0 0 1 182 174.7 Z" fill="#3a8ad8"/>
 <path d="M182 183 L190.3 183 A8.3 8.3 0 0 1 182 191.3 Z" fill="#e8c020"/>
 <ellipse cx="185.5" cy="181" rx="2.6" ry="4.2" transform="rotate(-30 185.5 181)" fill="#111"/>
 <circle cx="182" cy="183" r="8.3" fill="none" stroke="#6a4a2a" stroke-width="0.6"/>
 <path d="M235.5 178.5 l4.5 4.5 l-4.5 4.5" fill="none" stroke="#555" stroke-width="1.5"/>
 <!-- filter icon -->
 <path d="M8.8 205.6 L14.6 212 V218.4 L15.8 219.5 H17.5 V212 L24.2 205.6" fill="#f6f6f6" stroke="#1e1e1e" stroke-width="1.1" stroke-linejoin="round"/>
 <path d="M17 211.5 L22 206.5" stroke="#c8c8c8" stroke-width="1.2"/>
 <rect x="8.4" y="202.2" width="16.2" height="3.5" rx="1.3" fill="#5ab8e0" stroke="#0a4a6a" stroke-width="1"/>
 <rect x="10" y="203.4" width="8" height="1.2" fill="#d8f4ff"/>
</svg>
<!-- doc window controls -->
<svg style="left:0;top:0" width="1332" height="340">
 <g fill="none" stroke="#a2a2a2" stroke-width="1.2">
  <rect x="1200.5" y="135.5" width="11" height="13"/><rect x="1226.5" y="135.5" width="11" height="13"/>
  <rect x="1278" y="140.5" width="8" height="6"/><path d="M1280.5 140.5 v-4 h9 v7 h-3.5"/>
  <path d="M1305.5 137.5 l9.5 9.5 M1315 137.5 l-9.5 9.5"/>
 </g>
 <rect x="1200.5" y="135" width="11" height="1.8" fill="#a2a2a2"/><rect x="1226.5" y="135" width="11" height="1.8" fill="#a2a2a2"/>
 <path d="M1203 142 l3-3 v6 z M1235 142 l-3-3 v6 z" fill="#a2a2a2"/>
 <rect x="1253" y="145" width="10" height="2.8" fill="#a2a2a2"/>
 <!-- task pane -->
 <rect x="1304.5" y="178.5" width="25" height="144" fill="#d6d6d6" stroke="#8e8e8e" stroke-width="1"/>
 <rect x="1305" y="274" width="24.5" height="23.5" fill="#f5f5f5"/>
 <path d="M1304.5 201.5 h25 M1304.5 225.5 h25 M1304.5 249.5 h25 M1304.5 273.5 h25 M1304.5 297.5 h25" stroke="#8e8e8e" stroke-width="1"/>
 <path d="M1309.5 189 l7.5-6.5 l7.5 6.5" fill="none" stroke="#1a6a9a" stroke-width="2"/>
 <path d="M1310.5 188 v8.5 h13 v-8.5 l-6.5-5.5 z" fill="#f4f4f4" stroke="#222" stroke-width="1"/>
 <rect x="1315" y="191" width="3.5" height="5.5" fill="#fff" stroke="#222" stroke-width="0.9"/>
 <g fill="#f4f4f4" stroke="#222" stroke-width="0.9">
  <path d="M1310.5 208 l3-1.5 v13 l-3 1.2 z"/><path d="M1313.5 206.5 h2 l3.5 1.5 v13 h-2 l-3.5-1.5z"/>
  <path d="M1316 207 l3-1.5 l3 1.5 v12.5 l-3 1.5 z"/><path d="M1319 206 l3-1.5 l3 1.5 v12 l-3 1.5 z"/>
 </g>
 <path d="M1309.5 246 v-14 h5.5 l1.5 2 h6 v3" fill="#e0e0e0" stroke="#222" stroke-width="1"/>
 <path d="M1309.5 246 l3.5-9 h13 l-3.5 9 z" fill="#f0f0f0" stroke="#222" stroke-width="1"/>
 <rect x="1308.5" y="254.5" width="16" height="15" rx="1.5" fill="#f4f4f4" stroke="#222" stroke-width="1"/>
 <path d="M1311 258 h9 v2.5 h-3.5 v3 h2.5 v2 h-8 v-2 h2.5 v-3 h-2.5 z" fill="#f2c020" stroke="#8a5a08" stroke-width="0.5"/>
 <rect x="1320.5" y="262" width="2.5" height="5" fill="#aaa"/>
 <circle cx="1317" cy="285.5" r="7" fill="#2aa84a"/>
 <path d="M1317 285.5 V278.5 A7 7 0 0 1 1324 285.5 Z" fill="#d83a2a"/>
 <path d="M1317 285.5 H1310 A7 7 0 0 1 1317 278.5 Z" fill="#3a8ad8"/>
 <path d="M1317 285.5 H1324 A7 7 0 0 1 1317 292.5 Z" fill="#d8b040"/>
 <rect x="1308.5" y="302.5" width="16" height="16" rx="1" fill="#f4f4f4" stroke="#1a3a5a" stroke-width="1"/>
 <rect x="1309" y="303" width="15" height="2.5" fill="#3a8ac8"/>
 <rect x="1310.5" y="307.5" width="3" height="2" fill="#3a8ac8" stroke="#1a3a5a" stroke-width="0.5"/>
 <rect x="1310.5" y="311" width="3" height="2" fill="#3a8ac8" stroke="#1a3a5a" stroke-width="0.5"/>
 <rect x="1310.5" y="314.5" width="3" height="2" fill="#3a8ac8" stroke="#1a3a5a" stroke-width="0.5"/>
 <path d="M1315 308.5 h8 M1315 312 h8 M1315 315.5 h8" stroke="#1a3a5a" stroke-width="0.9"/>
</svg>


<!-- heads-up view toolbar -->
<svg style="left:0;top:0" width="1332" height="160">
 <defs>
  <linearGradient id="gl" x1="0" y1="0" x2="1" y2="1"><stop offset="0" stop-color="#f8f8f8"/><stop offset="1" stop-color="#bdbdbd"/></linearGradient>
  <linearGradient id="gb" x1="0" y1="0" x2="1" y2="1"><stop offset="0" stop-color="#a8d4f0"/><stop offset="1" stop-color="#4a90c0"/></linearGradient>
 </defs>
 <!-- zoom to fit -->
 <circle cx="624.5" cy="140" r="6" fill="url(#gl)" stroke="#555" stroke-width="1.2"/>
 <path d="M624.5 136 l-1.6 2 h3.2z M624.5 144 l-1.6-2 h3.2z M620.5 140 l2-1.6 v3.2z M628.5 140 l-2-1.6 v3.2z" fill="#444"/>
 <path d="M620 144.5 l-5.5 5.5" stroke="#5aa8d8" stroke-width="3.2" stroke-linecap="round"/>
 <!-- zoom area -->
 <rect x="645.5" y="133.5" width="11" height="11" fill="none" stroke="#444" stroke-width="1" stroke-dasharray="2 1.5"/>
 <circle cx="648.5" cy="142" r="6.3" fill="url(#gl)" stroke="#666" stroke-width="1.1"/>
 <path d="M644 146.5 l-5 5" stroke="#5aa8d8" stroke-width="3.2" stroke-linecap="round"/>
 <!-- previous view -->
 <path d="M667 145 l11-10 l4 4 l-10 11 z" fill="url(#gl)" stroke="#666" stroke-width="1"/>
 <ellipse cx="669" cy="147.5" rx="3" ry="2.3" transform="rotate(-45 669 147.5)" fill="#ddd" stroke="#666" stroke-width="1"/>
 <path d="M684 147 h-7.5 M679.5 144 l-3 3 l3 3" fill="none" stroke="#3a8ac0" stroke-width="2"/>
 <!-- section view -->
 <path d="M691.5 136 a9 3 0 0 1 17 0 v13 a9 3 0 0 1 -17 0 z" fill="#e6e6e6" stroke="#555" stroke-width="1"/>
 <rect x="692" y="137.5" width="5" height="12" fill="#5aa0d0" stroke="#333" stroke-width="0.6"/>
 <rect x="703" y="137.5" width="5" height="12" fill="#5aa0d0" stroke="#333" stroke-width="0.6"/>
 <path d="M697.5 137 a3 1.5 0 0 1 5.5 0 v12" fill="none" stroke="#777" stroke-width="0.8"/>
 <!-- dynamic annotation -->
 <path d="M722 134 h7 l-4 4 h3 l-7 5 l2-4 h-3 z" fill="#f0c020" stroke="#c07010" stroke-width="0.7"/>
 <path d="M718 146 l11-10 l4 4 l-10 11 z" fill="url(#gl)" stroke="#666" stroke-width="1"/>
 <text x="725" y="152" font-family="Liberation Serif" font-size="10" fill="#3a7ab0">A</text>
 <!-- view orientation -->
 <path d="M743.5 138 l4-4 h13 v13 l-4 4 h-13 z" fill="#f0f0f0" stroke="#444" stroke-width="1"/>
 <rect x="743.5" y="138" width="13" height="13" fill="url(#gb)" stroke="#444" stroke-width="1"/>
 <path d="M756.5 138 l4-4" stroke="#444" stroke-width="1"/>
 <path d="M768.5 141 h6 l-3 3.2 z" fill="#8a8a8a"/>
 <!-- display style -->
 <path d="M784.5 137 l9-3 l7.5 2.5 v12 l-8.5 3.5 l-8-3 z" fill="#f4f4f4" stroke="#555" stroke-width="1"/>
 <path d="M784.5 137 l8 3 v12" fill="url(#gb)" stroke="#555" stroke-width="0.8"/>
 <path d="M784.5 137 l8 3 v12 l-8-3 z" fill="url(#gb)"/>
 <path d="M808.5 141 h6 l-3 3.2 z" fill="#8a8a8a"/>
 <!-- hide/show -->
 <path d="M823 142.5 c5-6 13-6 18 0 c-5 6-13 6-18 0 z" fill="#f4f4f4" stroke="#777" stroke-width="1"/>
 <circle cx="832" cy="142" r="3.5" fill="#666"/>
 <path d="M832 134 v17" stroke="#555" stroke-width="1"/>
 <path d="M848.5 141 h6 l-3 3.2 z" fill="#8a8a8a"/>
 <!-- edit appearance -->
 <circle cx="870.5" cy="140" r="7" fill="#3aa84a"/>
 <path d="M870.5 140 V133 A7 7 0 0 1 877.5 140 Z" fill="#e05a4a"/>
 <path d="M870.5 140 H863.5 A7 7 0 0 1 870.5 133 Z" fill="#4a9ae0"/>
 <path d="M868 152 l2-4 l9-9 l2.5 2.5 l-9 9 z" fill="#f2d060" stroke="#555" stroke-width="0.8"/>
 <path d="M879 139 l3-3 l2.5 2.5 l-3 3 z" fill="#e04a4a" stroke="#555" stroke-width="0.6"/>
 <!-- apply scene -->
 <circle cx="897" cy="139" r="7" fill="#3aa84a"/>
 <path d="M897 139 V132 A7 7 0 0 1 904 139 Z" fill="#e05a4a"/>
 <path d="M897 139 H890 A7 7 0 0 1 897 132 Z" fill="#4a9ae0"/>
 <path d="M897 139 L904 139 A7 7 0 0 1 899 145.7 Z" fill="#e8c040"/>
 <rect x="888.5" y="145" width="18" height="6.5" fill="#333"/>
 <path d="M890 147 h3 v2.5 h-3z M896 147 h3 v2.5 h-3z M902 147 h3 v2.5 h-3z" fill="#fff"/>
 <path d="M914.5 141 h6 l-3 3.2 z" fill="#8a8a8a"/>
 <!-- view setting -->
 <rect x="929.5" y="134" width="17" height="12" fill="url(#gl)" stroke="#555" stroke-width="1.1"/>
 <path d="M938 146 v3 M934 150 h8" stroke="#555" stroke-width="1.5"/>
 <path d="M954.5 141 h6 l-3 3.2 z" fill="#8a8a8a"/>
</svg>

<!-- h scrollbar -->
<div class="a" style="left:2px;top:878px;width:246px;height:15px;background:#eaeaea"></div>
<div class="a" style="left:18px;top:878px;width:204px;height:15px;background:#cdcdcd"></div>
<svg style="left:0;top:870px" width="260" height="62">
 <path d="M12 11 l-4 4 l4 4" fill="none" stroke="#555" stroke-width="1.6"/>
 <path d="M237.5 11 l4 4 l-4 4" fill="none" stroke="#555" stroke-width="1.6"/>
</svg>
<!-- nav buttons -->
<div class="a" style="left:4px;top:895px;width:65px;height:15px;background:#a8a8a8;border-top:1px solid #1a1a1a"></div>
<svg style="left:0;top:890px" width="80" height="22">
 <g stroke="#f0f0f0" stroke-width="0.8"><path d="M19.5 6 v14 M35.5 6 v14 M51.5 6 v14"/></g>
 <g fill="#8a8a8a">
  <path d="M8 9 v9 h1.2 v-9 z M15 9 v9 l-5.5-4.5 z"/>
  <path d="M29.5 9 v9 l-5.5-4.5 z"/>
  <path d="M41.5 9 v9 l5.5-4.5 z"/>
  <path d="M56 9 v9 l5.5-4.5 z M62 9 v9 h1.2 v-9 z"/>
 </g>
</svg>
<!-- model tabs -->
<div class="a" style="left:302px;top:896px;width:1027px;height:14px;background:#f5f5f5;border-top:1px solid #fff;border-left:1px solid #fff"></div>
<div class="a" style="left:1328px;top:895px;width:1px;height:15px;background:#9a9a9a"></div>
<div class="a" style="left:69px;top:895px;width:1261px;height:1px;background:#9a9a9a"></div>
<div class="a" style="left:125px;top:895px;width:177px;height:15px;background:#d6d6d6;border:1px solid #8e8e8e;border-bottom:none"></div>
<div class="a" style="left:193px;top:895px;width:1px;height:15px;background:#8e8e8e"></div>
<div class="a" style="left:69px;top:893px;width:56px;height:17px;background:#f6f6f6;border-top:1px solid #fff"></div>
<div class="t b" style="left:80.5px;top:896px;font-size:12px;letter-spacing:0.5px">Model</div>
<div class="t" style="left:135.8px;top:896px;font-size:12px;letter-spacing:-0.3px">3D Views</div>
<div class="t" style="left:202.8px;top:896px;font-size:12px;letter-spacing:0.1px">Motion Study 1</div>
<!-- status bar -->
<div class="t" style="left:2.5px;top:915px;font-size:12px;letter-spacing:-0.35px">SOLIDWORKS Premium 2017 x64 Edition</div>
<div class="a" style="left:1038px;top:913px;width:1px;height:14px;background:#d0d0d0"></div>
<div class="a" style="left:1046px;top:913px;width:1px;height:14px;background:#d0d0d0"></div>
<div class="a" style="left:1117px;top:913px;width:1px;height:14px;background:#d0d0d0"></div>
<div class="a" style="left:1133px;top:913px;width:1px;height:14px;background:#d0d0d0"></div>
<div class="t" style="left:1049.3px;top:915px;font-size:12px;letter-spacing:0px">Editing Part</div>
<div class="t" style="left:1164.8px;top:915px;font-size:12px;letter-spacing:-0.1px">MMGS</div>
<svg style="left:0;top:900px" width="1332" height="32">
 <path d="M1219 23.5 h6.5 l-3.25-3.5 z" fill="#222"/>
 <g>
  <path d="M1292.5 16.8 L1300 13.6 L1308.3 18 L1308.3 21.6 L1301 26 L1292.8 21.8 Z" fill="#f6f6f6" stroke="#222" stroke-width="1.1" stroke-linejoin="round"/>
  <path d="M1292.8 17.2 L1301 21.8 L1308 18 M1301 21.8 V25.6" fill="none" stroke="#222" stroke-width="0.9"/>
  <path d="M1293.5 19.5 L1300.8 23.6" stroke="#bbb" stroke-width="0.8"/>
  <circle cx="1298.4" cy="17.3" r="1.8" fill="#fff" stroke="#222" stroke-width="1"/>
  <path d="M1302 20 l3.2-1.8" stroke="#222" stroke-width="1.4"/>
 </g>
 <g fill="#b8b8b8"><rect x="1326" y="19.5" width="1.2" height="1.2"/><rect x="1323" y="22.5" width="1.2" height="1.2"/><rect x="1326" y="22.5" width="1.2" height="1.2"/><rect x="1320" y="25.5" width="1.2" height="1.2"/><rect x="1323" y="25.5" width="1.2" height="1.2"/><rect x="1326" y="25.5" width="1.2" height="1.2"/></g>
</svg>

</body></html>
